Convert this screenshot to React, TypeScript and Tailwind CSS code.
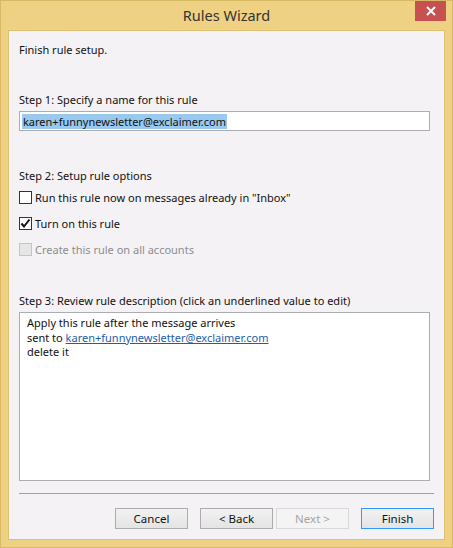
import { ReactNode } from "react";

const FONT = { fontFamily: '"Noto Sans", "Open Sans", sans-serif' };

function CheckRow({
  label,
  checked = false,
  disabled = false,
  className = "",
}: {
  label: string;
  checked?: boolean;
  disabled?: boolean;
  className?: string;
}) {
  return (
    <div className={`flex h-[15px] items-center ${className}`}>
      <span
        className={`flex h-[13px] w-[13px] shrink-0 items-center justify-center border ${
          disabled ? "border-[#c4c4c4] bg-[#e6e6e6]" : "border-[#333333] bg-white"
        }`}
      >
        {checked && (
          <svg width="11" height="11" viewBox="0 0 11 11">
            <path d="M1.5 5.5 L4 8.5 L9.5 1.5" fill="none" stroke="#111" strokeWidth="2" />
          </svg>
        )}
      </span>
      <span className={`ml-[3px] ${disabled ? "text-[#8d8d8d]" : "text-[#111]"}`}>{label}</span>
    </div>
  );
}

function Button({
  children,
  variant = "normal",
  className = "",
}: {
  children: ReactNode;
  variant?: "normal" | "default" | "disabled";
  className?: string;
}) {
  const look =
    variant === "disabled"
      ? "border-[#d9d9d9] bg-[#f4f4f4] text-[#a3a3a3]"
      : variant === "default"
      ? "border-[#3399ff] bg-gradient-to-b from-[#f2f2f2] to-[#e4e4e4] text-[#111]"
      : "border-[#acacac] bg-gradient-to-b from-[#f2f2f2] to-[#e4e4e4] text-[#111]";
  return (
    <div
      className={`flex h-[21px] w-[73px] items-center justify-center border text-[11.5px] ${look} ${className}`}
    >
      {children}
    </div>
  );
}

export default function App() {
  return (
    <div
      className="flex h-[548px] w-[453px] flex-col border border-[#d8b965] bg-[#efd183] text-[11px]"
      style={FONT}
    >
      {/* title bar */}
      <div className="relative flex h-[29px] shrink-0 items-center justify-center">
        <span className="text-[14.5px] text-[#333333]">Rules Wizard</span>
        <div className="absolute right-[6px] top-0 flex h-[20px] w-[31px] items-center justify-center bg-[#c75050]">
          <svg width="10" height="10" viewBox="0 0 10 10">
            <path d="M1 1 L9 9 M9 1 L1 9" stroke="white" strokeWidth="2" />
          </svg>
        </div>
      </div>

      {/* client area */}
      <div className="mx-[7px] flex h-[510px] flex-col border border-[#dcc173] bg-[#f5f2f6] pl-[10px] pt-[11px] leading-[15px] text-[#111]">
        <div>Finish rule setup.</div>

        <div className="mt-[35px]">Step 1: Specify a name for this rule</div>
        <div className="mt-[4px] flex h-[20px] w-[411px] items-center border border-[#abadb3] bg-white pl-[2px]">
          <span className="bg-[#99c9ef] px-[1px] leading-[15px]">karen+funnynewsletter@exclaimer.com</span>
        </div>

        <div className="mt-[37px]">Step 2: Setup rule options</div>
        <CheckRow className="mt-[7px]" label={'Run this rule now on messages already in "Inbox"'} />
        <CheckRow className="mt-[11px]" label="Turn on this rule" checked />
        <CheckRow className="mt-[11px]" label="Create this rule on all accounts" disabled />

        <div className="mt-[36px]">Step 3: Review rule description (click an underlined value to edit)</div>
        <div className="mt-[4px] h-[169px] w-[411px] border border-[#abadb3] bg-white pl-[7px] pt-[3px] leading-[14.5px]">
          <div>Apply this rule after the message arrives</div>
          <div>
            sent to{" "}
            <span className="text-[#1c5ea8] underline">karen+funnynewsletter@exclaimer.com</span>
          </div>
          <div>delete it</div>
        </div>

        <div className="mt-[12px] h-px w-[415px] bg-[#a0a0a0]" />

        <div className="mt-[14px] flex w-[415px] justify-end">
          <Button>Cancel</Button>
          <Button className="ml-[12px]">&lt; Back</Button>
          <Button className="ml-[3px]" variant="disabled">
            Next &gt;
          </Button>
          <Button className="ml-[12px]" variant="default">
            Finish
          </Button>
        </div>
      </div>
    </div>
  );
}
